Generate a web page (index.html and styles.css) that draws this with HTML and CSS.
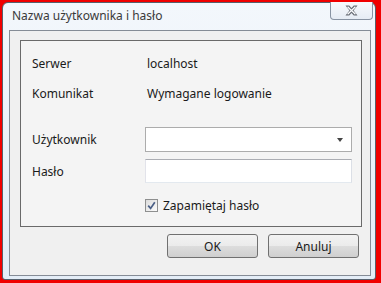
FILE: index.html
```html
<!DOCTYPE html>
<html lang="pl">
<head>
  <meta charset="UTF-8">
  <title>Nazwa użytkownika i hasło</title>
  <link rel="stylesheet" href="styles.css">
</head>
<body>
  <div class="window">
    <div class="title-bar">
      <span class="title-text">Nazwa użytkownika i hasło</span>
      <div class="close-btn">
        <svg class="close-icon" width="13" height="11" viewBox="0 0 13 11">
          <path d="M0.5 0.5 L4.2 0.5 L6.5 3 L8.8 0.5 L12.5 0.5 L8.6 5.5 L12.5 10.5 L8.8 10.5 L6.5 8 L4.2 10.5 L0.5 10.5 L4.4 5.5 Z" fill="#666b73"/>
          <path d="M2.6 1.8 L10.4 9.2 M10.4 1.8 L2.6 9.2" stroke="#fbfcfe" stroke-width="1.3" fill="none"/>
        </svg>
      </div>
    </div>

    <div class="client">
      <div class="login-box">
        <div class="form-row info-row">
          <span class="label">Serwer</span>
          <span class="value">localhost</span>
        </div>
        <div class="form-row info-row">
          <span class="label">Komunikat</span>
          <span class="value">Wymagane logowanie</span>
        </div>
        <div class="form-row user-row">
          <span class="label">Użytkownik</span>
          <div class="combo">
            <span class="combo-arrow"></span>
          </div>
        </div>
        <div class="form-row pass-row">
          <span class="label">Hasło</span>
          <div class="text-input"></div>
        </div>
        <div class="form-row check-row">
          <span class="label"></span>
          <label class="check">
            <span class="check-box">
              <svg width="9" height="9" viewBox="0 0 9 9">
                <path d="M1.2 4.6 L3.6 7.4 L7.8 1.2" fill="none" stroke="#4a5f86" stroke-width="1.7"/>
              </svg>
            </span>
            <span>Zapamiętaj hasło</span>
          </label>
        </div>
      </div>

      <div class="buttons">
        <button class="btn" type="button">OK</button>
        <button class="btn" type="button">Anuluj</button>
      </div>
    </div>
  </div>
</body>
</html>
```

FILE: styles.css
```css
html, body {
    margin: 0;
    height: 100%;
}
body {
    background-color: #f00000;
    padding: 2px 5px 3px 2px;
    box-sizing: border-box;
    font-family: 'Noto Sans', 'DejaVu Sans', sans-serif;
    font-size: 12px;
    color: #1a1a1a;
}
.window {
    height: 278px;
    box-sizing: border-box;
    border: 1px solid #56606c;
    border-radius: 6px 6px 3px 3px;
    background: linear-gradient(#f3f7fc, #e4edf7);
    display: flex;
    flex-direction: column;
    padding: 0 4px 3px 6px;
}
.title-bar {
    height: 27px;
    display: flex;
    justify-content: space-between;
    align-items: flex-start;
}
.title-text {
    margin-top: 4px;
    margin-left: 3px;
    font-size: 12px;
    color: #3a3a3a;
}
.close-btn {
    width: 43px;
    height: 18px;
    flex: none;
    box-sizing: border-box;
    margin-right: -2px;
    margin-top: -1px;
    border: 1px solid #8893a2;
    border-top: none;
    border-radius: 0 0 4px 4px;
    background: linear-gradient(#f8fafd, #e6ecf4);
    display: flex;
    align-items: center;
    justify-content: center;
}
.close-icon {
    display: block;
    flex: none;
    width: 13px;
    height: 11px;
}
.client {
    flex: 1;
    border: 1px solid #858c96;
    background-color: #f0f0f0;
    padding: 9px 8px 0 10px;
    display: flex;
    flex-direction: column;
}
.login-box {
    height: 187px;
    box-sizing: border-box;
    border: 1px solid #6a6a6a;
    background-color: #f4f4f4;
    padding: 12px 9px 0 11px;
    display: flex;
    flex-direction: column;
}
.form-row {
    display: flex;
    align-items: center;
}
.label {
    width: 113px;
    flex-shrink: 0;
}
.info-row {
    height: 20px;
    margin-bottom: 10px;
}
.info-row .value {
    padding-left: 2px;
}
.user-row {
    margin-top: 14px;
}
.pass-row {
    margin-top: 7px;
}
.check-row {
    margin-top: 14px;
    height: 16px;
}
.combo, .text-input {
    flex: 1;
    box-sizing: border-box;
    background-color: #ffffff;
    border: 1px solid;
    border-color: #abadb3 #dbdfe6 #e3e9ef #e2e3ea;
    position: relative;
}
.combo {
    height: 25px;
    border-color: #acacac;
}
.text-input {
    height: 24px;
}
.combo-arrow {
    position: absolute;
    right: 8px;
    top: 10px;
    border-left: 3.5px solid transparent;
    border-right: 3.5px solid transparent;
    border-top: 4px solid #444;
}
.check {
    display: flex;
    align-items: center;
    gap: 5px;
}
.check-box {
    width: 11px;
    height: 11px;
    border: 1px solid #8e8f8f;
    background: linear-gradient(135deg, #dcdcdc, #fbfbfb);
    display: flex;
    align-items: center;
    justify-content: center;
}
.buttons {
    display: flex;
    justify-content: flex-end;
    gap: 10px;
    margin-top: 7px;
    padding-right: 3px;
}
.btn {
    width: 91px;
    height: 24px;
    border: 1px solid #707070;
    border-radius: 3px;
    background: linear-gradient(#f2f2f2 0%, #ebebeb 50%, #dddddd 51%, #cfcfcf 100%);
    font-family: 'Noto Sans', 'DejaVu Sans', sans-serif;
    font-size: 12px;
    color: #1a1a1a;
    padding: 0;
}
```
